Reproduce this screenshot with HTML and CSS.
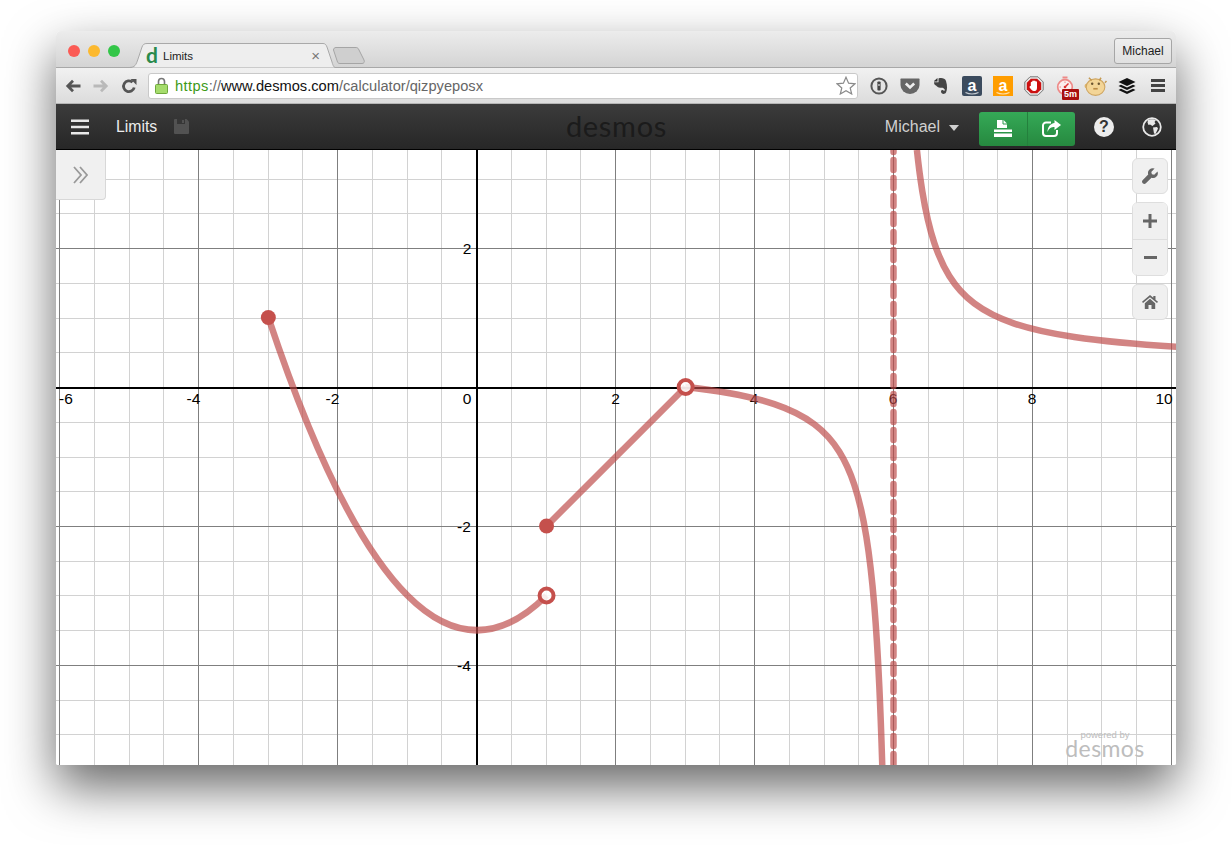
FILE: index.html
```html
<!DOCTYPE html>
<html>
<head>
  <title>Limits</title>
  <link rel="stylesheet" href="styles.css">
</head>
<body>
  <div class="window">
    <div class="titlebar">
      <div class="lights">
        <span class="light red"></span>
        <span class="light yellow"></span>
        <span class="light green"></span>
      </div>
      <div class="tab">
        <svg class="tab-shape" width="206" height="25" viewBox="0 0 206 25">
          <path d="M0 24.5C6 24.5 7 22 9 16L13 4C14 1.5 15 .5 18 .5H194C196 .5 197 1.5 198 4L203 19C204 23 205 24 206 24.5" fill="#eeeeee" stroke="#a9a9a9"/>
        </svg>
        <span class="favicon">d</span>
        <span class="tab-title">Limits</span>
        <span class="tab-close">×</span>
      </div>
      <svg class="newtab" width="32" height="17" viewBox="0 0 32 17">
        <path d="M.5 3C.5 1.5 1.5 .5 3 .5H23C24 .5 25 1 25.5 2L31 13C31.8 15 31 16.5 29 16.5H7C5.500 16.5 5 16 4.5 15z" fill="#cfcfcf" stroke="#a5a5a5"/>
      </svg>
      <div class="spacer"></div>
      <div class="profile">Michael</div>
    </div>

    <div class="toolbar">
      <div class="navbtn">
        <svg width="16" height="14" viewBox="0 0 16 14"><path d="M15.5 7H3M8 1.800L2.800 7 8 12.200" fill="none" stroke="#555" stroke-width="2.8"/></svg>
      </div>
      <div class="navbtn">
        <svg width="16" height="14" viewBox="0 0 16 14"><path d="M.5 7H13M8 1.800L13.200 7 8 12.200" fill="none" stroke="#b9b9b9" stroke-width="2.8"/></svg>
      </div>
      <div class="navbtn">
        <svg width="16" height="16" viewBox="0 0 16 16"><path d="M13.2 9.5A5.4 5.4 0 1 1 11.5 4.2" fill="none" stroke="#555" stroke-width="2.8"/><path d="M9.5 .9L15.5 .9V7z" fill="#555"/></svg>
      </div>
      <div class="omnibox">
        <svg class="lock" width="13" height="17" viewBox="0 0 13 17">
          <path d="M3.5 8V4.5a3 3 0 0 1 6 0V8" fill="none" stroke="#777" stroke-width="1.6"/>
          <rect x=".5" y="7.5" width="12" height="9" rx="1" fill="#a5dc6c" stroke="#6fa83c"/>
        </svg>
        <span class="url"><span class="scheme">https</span><span class="path">://</span><span class="host">www.desmos.com</span><span class="path">/calculator/qizpyeposx</span></span>
        <svg class="star" width="20" height="19" viewBox="0 0 20 19"><path d="M10 1.200L12.600 7.200 19 7.800 14.200 12 15.700 18 10 14.800 4.300 18 5.800 12 1 7.800 7.400 7.200z" fill="#fff" stroke="#8a8a8a" stroke-width="1.2"/></svg>
      </div>
      <div class="exts">
        <div class="ext">
          <svg width="18" height="18" viewBox="0 0 18 18"><circle cx="9" cy="9" r="7.6" fill="#e4e4e4" stroke="#555" stroke-width="2"/><rect x="7.4" y="4.5" width="3.2" height="9" rx=".8" fill="#444"/><rect x="8.4" y="7" width="1.2" height="2" fill="#ddd"/></svg>
        </div>
        <div class="ext">
          <svg width="20" height="18" viewBox="0 0 20 18"><path d="M1 1.5h18a1 1 0 0 1 .5.8V8a9.500 9 0 0 1-19 0V2.300a1 1 0 0 1 .5-.8z" fill="#666"/><path d="M5.800 6.500L10 10.500 14.200 6.500" fill="none" stroke="#eee" stroke-width="2.6"/></svg>
        </div>
        <div class="ext">
          <svg width="16" height="18" viewBox="0 0 16 18"><path d="M1 4L4.500 1V4.500H1z" fill="#333"/><path d="M5.500 1.500C8 .5 12 1 13 4 14.500 9 14.300 13 13 15.500 11.500 18 8 17 8 14.500 8 13 10 12.500 11 14L12 13C11 11 9.500 10.500 7.500 10.800 5.500 11 4 9.500 3 8.500 1.500 8 1 6.500 1 5.200L5.500 5.200z" fill="#444"/></svg>
        </div>
        <div class="ext">
          <svg width="20" height="20" viewBox="0 0 20 20"><rect width="20" height="20" rx="2" fill="#3b4b5e"/><text class="amazon-a" x="10" y="14.5">a</text><path d="M3.500 16.500Q10 19.500 16.500 16.500" fill="none" stroke="#c9ced4" stroke-width="1.2"/></svg>
        </div>
        <div class="ext">
          <svg width="20" height="20" viewBox="0 0 20 20"><rect width="20" height="20" fill="#ff9d00"/><text class="amazon-a" x="10" y="14.5">a</text><path d="M3.500 16.500Q10 19.500 16.500 16.500" fill="none" stroke="#ffe2ad" stroke-width="1.2"/></svg>
        </div>
        <div class="ext">
          <svg width="20" height="20" viewBox="0 0 20 20"><path d="M6 .8H14L19.200 6V14L14 19.200H6L.8 14V6z" fill="#e8e8e8" stroke="#777"/><path d="M6.800 2.800H13.200L17.200 6.800V13.200L13.200 17.200H6.800L2.800 13.200V6.800z" fill="#cc1010"/><path d="M6.800 10V6.500a1 1 0 0 1 1.400-.5V5a1 1 0 0 1 1.800 0 1 1 0 0 1 1.600.5 1 1 0 0 1 1.400.5V12C13 14.500 11.500 15 10 15 8 15 7.500 14 5.500 11.300 5.500 10.300 6.300 9.800 6.800 10z" fill="#fff"/></svg>
        </div>
        <div class="ext timer">
          <svg width="18" height="20" viewBox="0 0 18 20"><rect x="6.5" y=".5" width="5" height="2" fill="#ee8a88"/><circle cx="9" cy="11" r="7.3" fill="#fbeeee" stroke="#ee8a88" stroke-width="1.7"/><path d="M9 5.500V7M3.500 11H5M9 15V16.500" stroke="#ee8a88"/><path d="M9 11L12.500 7.500" stroke="#d33" stroke-width="1.4"/><circle cx="9" cy="11" r="1.3" fill="#d33"/></svg>
          <span class="timer-badge">5m</span>
        </div>
        <div class="ext">
          <svg width="25" height="22" viewBox="0 0 22 20"><circle cx="3" cy="10" r="2" fill="#e0b86e"/><ellipse cx="11" cy="11" rx="8.5" ry="7.5" fill="#f3d597" stroke="#cfa662"/><path d="M5 2.500L7.500 5M16 2.500L14.500 5M19.500 7L21 5.500" stroke="#c59a52" stroke-width="1.4"/><circle cx="8" cy="8" r="1.1" fill="#6a5430"/><circle cx="14" cy="8" r="1.1" fill="#6a5430"/><path d="M9 12.500h4" stroke="#b98b45" stroke-width="1.5"/></svg>
        </div>
        <div class="ext">
          <svg width="18" height="18" viewBox="0 0 18 18"><path d="M9 1L17.500 5 9 9 .5 5z" fill="#111"/><path d="M.5 9L3 7.800 9 10.600 15 7.800 17.500 9 9 13z" fill="#111"/><path d="M.5 13L3 11.800 9 14.600 15 11.800 17.500 13 9 17z" fill="#111"/></svg>
        </div>
        <div class="ext">
          <svg width="14" height="13" viewBox="0 0 14 13"><path d="M0 0h14v3H0zM0 5h14v3H0zM0 10h14v3H0z" fill="#444"/></svg>
        </div>
      </div>
    </div>

    <div class="apphead">
      <div class="head-left">
        <svg width="18" height="16" viewBox="0 0 18 16"><path d="M0 .5h18v2.400H0zM0 6.800h18v2.400H0zM0 13.100h18v2.400H0z" fill="#e8e8e8"/></svg>
        <span class="graph-title">Limits</span>
        <svg class="save" width="15" height="15" viewBox="0 0 15 15"><path d="M1 0H12.500L15 2.500V14a1 1 0 0 1-1 1H1a1 1 0 0 1-1-1V1a1 1 0 0 1 1-1z" fill="#525252"/><rect x="3" y="0" width="8" height="5" fill="#363636"/><rect x="8" y="1" width="2" height="3" fill="#525252"/></svg>
      </div>
      <div class="logo">desmos</div>
      <div class="head-right">
        <span class="user">Michael</span>
        <span class="caret"></span>
        <div class="actions">
          <div class="action">
            <svg width="18" height="17" viewBox="0 0 18 17"><path d="M3 0H9.500L13 3.500V8H3z" fill="#fff"/><path d="M9 0V4H13" fill="none" stroke="#2f9a4f"/><path d="M0 9.500H18V12H0zM0 13.500H18V17H0z" fill="#fff"/></svg>
          </div>
          <div class="action">
            <svg width="19" height="17" viewBox="0 0 19 17"><path d="M9 2.500H4a3 3 0 0 0-3 3V13a3 3 0 0 0 3 3h8a3 3 0 0 0 3-3v-3" fill="none" stroke="#fff" stroke-width="2"/><path d="M12.500 0L19 5 12.500 10V7C9.500 7 7 8 5.500 12 5.500 7 8.500 3.500 12.500 3z" fill="#fff"/></svg>
          </div>
        </div>
        <div class="help">?</div>
        <svg class="globe" width="20" height="20" viewBox="0 0 20 20"><circle cx="10" cy="10" r="8.8" fill="#333" stroke="#e8e8e8" stroke-width="1.8"/><path d="M6 3C8 2 12 2 14 3L12.500 5 13.500 6.500 10.500 9 8 7.500 6.500 8 5.500 5.500zM11 10.500L15 10 16 11.500 13.500 17 12 16.500 11.500 13.500z" fill="#e8e8e8"/></svg>
      </div>
    </div>

    <div class="graph">
      <svg class="plot" width="1120" height="615" viewBox="0 0 1120 615">
        <path class="grid-minor" d="M38.5 0V615M73.5 0V615M107.5 0V615M177.5 0V615M212.5 0V615M246.5 0V615M316.5 0V615M351.5 0V615M385.5 0V615M455.5 0V615M490.5 0V615M524.5 0V615M594.5 0V615M629.5 0V615M663.5 0V615M733.5 0V615M768.5 0V615M802.5 0V615M872.5 0V615M907.5 0V615M941.5 0V615M1011.5 0V615M1045.5 0V615M1080.5 0V615M0 29.5H1120M0 63.5H1120M0 133.5H1120M0 168.5H1120M0 202.5H1120M0 272.5H1120M0 307.5H1120M0 341.5H1120M0 411.5H1120M0 445.5H1120M0 480.5H1120M0 550.5H1120M0 584.5H1120"/>
        <path class="grid-major" d="M3.5 0V615M142.5 0V615M281.5 0V615M559.5 0V615M698.5 0V615M837.5 0V615M976.5 0V615M1115.5 0V615M0 98.5H1120M0 376.5H1120M0 515.5H1120"/>
        <path class="axis" d="M421 0V615M0 238H1120"/>

        <text class="tick" x="10" y="254">-6</text>
        <text class="tick" x="137.5" y="254">-4</text>
        <text class="tick" x="276.5" y="254">-2</text>
        <text class="tick" x="411" y="254">0</text>
        <text class="tick" x="559.5" y="254">2</text>
        <text class="tick" x="698" y="254">4</text>
        <text class="tick" x="837" y="254">6</text>
        <text class="tick" x="976" y="254">8</text>
        <text class="tick" x="1108" y="254">10</text>
        <text class="tick" x="411" y="104">2</text>
        <text class="tick" x="408" y="382">-2</text>
        <text class="tick" x="408" y="521">-4</text>

        <!-- y = x^2/2 - 3.5 -->
        <path class="curve" d="M212.35 167.5Q351.45 584.5 490.55 445.5"/>
        <path class="curve" d="M490.55 376L629.65 237"/>
        <!-- y = 1/(x-6) + 1/3, both branches -->
        <path class="curve" d="M629.65 237Q685.93 243.25 718.3 254.11Q742.3 262.17 758.3 274.26Q773.11 285.44 783.3 301.72Q791.98 315.6 798.3 334.68Q805.36 356.01 810.3 386.47Q814.97 415.25 818.3 455.53Q821.16 490.06 823.3 536.1Q824.97 571.9 826.3 616.66"/>
        <path class="curve" d="M860.9 0Q863.31 22.76 866.3 41.19Q871.24 71.65 878.3 92.98Q884.62 112.06 893.3 125.94Q903.49 142.22 918.3 153.4Q934.3 165.49 958.3 173.55Q982.3 181.6 1018.3 186.97Q1058.04 192.9 1120.3 196.69"/>
        <path class="curve dashed" d="M837.5 -8V620"/>

        <circle class="pt-solid" cx="212.35" cy="167.5" r="7.5"/>
        <circle class="pt-solid" cx="490.55" cy="376" r="7.5"/>
        <circle class="pt-open" cx="490.55" cy="445.5" r="7"/>
        <circle class="pt-open" cx="629.65" cy="237" r="7"/>
      </svg>

      <div class="expr-toggle">
        <svg width="16" height="18" viewBox="0 0 16 18"><path d="M1 1L8 9 1 17M7 1L14 9 7 17" fill="none" stroke="#999" stroke-width="1.8"/></svg>
      </div>

      <div class="controls">
        <div class="ctl">
          <svg width="16" height="16" viewBox="0 0 16 16"><path d="M15.5 3.5L12.2 6.800 9.900 6.200 9.300 3.900 12.600 .6A4.800 4.800 0 0 0 6.200 6.500L.8 12A2.200 2.200 0 0 0 3.900 15.200L9.500 9.800A4.800 4.800 0 0 0 15.500 3.500z" fill="#666"/></svg>
        </div>
        <div class="ctl-group">
          <div class="ctl">
            <svg width="14" height="14" viewBox="0 0 14 14"><path d="M5.500 0h3v5.500H14v3H8.500V14h-3V8.500H0v-3h5.500z" fill="#666"/></svg>
          </div>
          <div class="ctl minus">
            <svg width="13" height="3" viewBox="0 0 13 3"><rect width="13" height="3" fill="#666"/></svg>
          </div>
        </div>
        <div class="ctl">
          <svg width="16" height="14" viewBox="0 0 16 14"><path d="M8 0L0 6.800 1 8 8 2.200 15 8 16 6.800 13.500 4.700V1H11.300V2.800z" fill="#666"/><path d="M2.800 8.200L8 3.800 13.200 8.200V14H9.500V10H6.500V14H2.800z" fill="#666"/></svg>
        </div>
      </div>

      <div class="watermark">
        <span class="powered">powered by</span>
        <span class="wm-logo">desmos</span>
      </div>
    </div>
  </div>
</body>
</html>
```

FILE: styles.css
```css
* {
  margin: 0;
  padding: 0;
  box-sizing: border-box;
}

html, body {
  height: 845px;
  overflow: hidden;
}

body {
  background: #fff;
  font-family: "Liberation Sans", Arial, sans-serif;
  padding: 31px 0 0 56px;
}

.window {
  width: 1120px;
  height: 734px;
  display: flex;
  flex-direction: column;
  border-radius: 5px 5px 2px 2px;
  box-shadow: 0 22px 50px rgba(0, 0, 0, 0.6);
}

/* chrome title bar */
.titlebar {
  height: 37px;
  display: flex;
  align-items: flex-end;
  padding: 0 4px 0 12px;
  background: linear-gradient(#ececec, #d4d4d4);
  border-bottom: 1px solid #a8a8a8;
  border-radius: 5px 5px 0 0;
}

.lights {
  display: flex;
  gap: 8px;
  align-self: flex-start;
  margin-top: 14px;
}

.light {
  width: 12px;
  height: 12px;
  border-radius: 50%;
}

.light.red { background: #fb5b55; }
.light.yellow { background: #fcb92f; }
.light.green { background: #33c648; }

.tab {
  position: relative;
  width: 206px;
  height: 25px;
  margin-left: 9px;
  margin-bottom: -1px;
  display: flex;
  align-items: center;
  padding-left: 17px;
}

.tab-shape {
  position: absolute;
  left: 0;
  top: 0;
}

.favicon {
  position: relative;
  color: #2a8a4c;
  font-family: "Lato", sans-serif;
  font-weight: 700;
  font-size: 21px;
  line-height: 20px;
  width: 17px;
  margin-top: -2px;
}

.tab-title {
  position: relative;
  font-size: 11.5px;
  color: #222;
  flex: 1;
}

.tab-close {
  position: relative;
  color: #777;
  font-size: 15px;
  margin-right: 15px;
}

.newtab {
  margin: 0 0 3px -2px;
}

.spacer {
  flex: 1;
}

.profile {
  align-self: flex-start;
  margin-top: 7px;
  width: 58px;
  height: 26px;
  border: 1px solid #a6a6a6;
  border-radius: 3px;
  background: linear-gradient(#eeeeee, #e0e0e0);
  font-size: 12px;
  color: #222;
  display: flex;
  align-items: center;
  justify-content: center;
}

/* chrome toolbar */
.toolbar {
  height: 36px;
  display: flex;
  align-items: center;
  padding-left: 3px;
  background: linear-gradient(#f1f1f1, #dcdcdc);
  border-bottom: 1px solid #b5b5b5;
}

.navbtn {
  width: 28px;
  display: flex;
  justify-content: center;
}

.omnibox {
  width: 710px;
  height: 26px;
  margin-left: 5px;
  display: flex;
  align-items: center;
  padding: 0 1px 0 6px;
  background: #fff;
  border: 1px solid #c9c9c9;
  border-radius: 3px;
}

.lock {
  flex: none;
}

.url {
  flex: 1;
  margin-left: 7px;
  font-size: 14.65px;
  white-space: nowrap;
}

.scheme { color: #3d9a16; letter-spacing: 0.4px; }
.host { color: #111; }
.path { color: #666; }

.exts {
  display: flex;
  margin-left: 5px;
}

.ext {
  width: 31px;
  height: 24px;
  display: flex;
  align-items: center;
  justify-content: center;
}

.amazon-a {
  font-family: "Liberation Sans", Arial, sans-serif;
  font-size: 16px;
  font-weight: bold;
  fill: #fff;
  text-anchor: middle;
}

.timer {
  position: relative;
}

.timer-badge {
  position: absolute;
  left: 13px;
  top: 15px;
  width: 17px;
  height: 11px;
  background: #a80f0f;
  border-radius: 1px;
  color: #fff;
  font-size: 9px;
  font-weight: bold;
  line-height: 11px;
  text-align: center;
}

/* desmos header */
.apphead {
  height: 46px;
  display: grid;
  grid-template-columns: 1fr auto 1fr;
  align-items: center;
  padding: 0 14px 0 15px;
  background: linear-gradient(#3b3b3b, #272727);
  border-bottom: 1px solid #000;
}

.head-left, .head-right {
  display: flex;
  align-items: center;
}

.head-right {
  justify-content: flex-end;
}

.graph-title {
  margin-left: 27px;
  color: #ececec;
  font-size: 15.8px;
}

.save {
  margin-left: 17px;
}

.logo {
  color: #1b1b1b;
  font-family: "Lato", sans-serif;
  font-size: 29px;
  line-height: 30px;
  letter-spacing: 0.7px;
  margin-top: -2px;
}

.user {
  color: #d0d0d0;
  font-size: 16px;
  margin-right: 1px;
}

.caret {
  width: 0;
  height: 0;
  margin: 2px 20px 0 8px;
  border-left: 5.5px solid transparent;
  border-right: 5.5px solid transparent;
  border-top: 6px solid #d0d0d0;
}

.actions {
  width: 96px;
  height: 34px;
  margin-top: 4px;
  display: flex;
  border-radius: 3px;
  background: linear-gradient(#35a957, #26893f);
}

.action {
  flex: 1;
  display: flex;
  align-items: center;
  justify-content: center;
}

.action + .action {
  border-left: 1px solid #24803d;
}

.help {
  width: 20px;
  height: 20px;
  margin-left: 19px;
  border-radius: 50%;
  background: #ececec;
  color: #333;
  font-size: 16px;
  font-weight: bold;
  line-height: 20px;
  text-align: center;
}

.globe {
  margin-left: 28px;
}

/* graph paper */
.graph {
  position: relative;
  height: 615px;
  background: #fff;
  overflow: hidden;
  border-radius: 0 0 2px 2px;
}

.plot {
  display: block;
}

.grid-minor {
  fill: none;
  stroke: #d2d2d2;
  stroke-width: 1;
  shape-rendering: crispEdges;
}

.grid-major {
  fill: none;
  stroke: #7f7f7f;
  stroke-width: 1;
  shape-rendering: crispEdges;
}

.axis {
  fill: none;
  stroke: #000;
  stroke-width: 2;
  shape-rendering: crispEdges;
}

.tick {
  font-family: "Liberation Sans", Arial, sans-serif;
  font-size: 15.5px;
  fill: #000;
  text-anchor: middle;
}

.curve {
  fill: none;
  stroke: #bd4a48;
  stroke-opacity: 0.68;
  stroke-width: 6.5;
  stroke-linejoin: round;
}

.curve.dashed {
  stroke-linecap: round;
  stroke-dasharray: 10 8;
}

.pt-solid {
  fill: #c5504c;
}

.pt-open {
  fill: #fff;
  fill-opacity: 0.85;
  stroke: #c5504c;
  stroke-width: 4;
}

.expr-toggle {
  position: absolute;
  left: 0;
  top: 0;
  width: 50px;
  height: 50px;
  display: flex;
  align-items: center;
  justify-content: center;
  background: #f0f0f0;
  border: 1px solid #d8d8d8;
  border-width: 0 1px 1px 0;
  border-radius: 0 0 4px 0;
}

.controls {
  position: absolute;
  left: 1076px;
  top: 8px;
  display: flex;
  flex-direction: column;
  gap: 8px;
}

.ctl {
  width: 36px;
  height: 36px;
  display: flex;
  align-items: center;
  justify-content: center;
  background: #f0f0f0;
  border: 1px solid #dedede;
  border-radius: 6px;
}

.ctl-group {
  display: flex;
  flex-direction: column;
  border: 1px solid #dedede;
  border-radius: 6px;
  overflow: hidden;
}

.ctl-group .ctl {
  width: 34px;
  height: 36px;
  border: none;
  border-radius: 0;
}

.ctl-group .minus {
  border-top: 1px solid #dedede;
}

.watermark {
  position: absolute;
  left: 1009px;
  top: 580px;
  width: 80px;
  display: flex;
  flex-direction: column;
  align-items: center;
  color: #bdbdbd;
}

.powered {
  font-size: 9.5px;
  line-height: 10px;
}

.wm-logo {
  font-family: "Lato", sans-serif;
  font-size: 23px;
  line-height: 20px;
  letter-spacing: 0.4px;
  margin-top: -2px;
}
```
